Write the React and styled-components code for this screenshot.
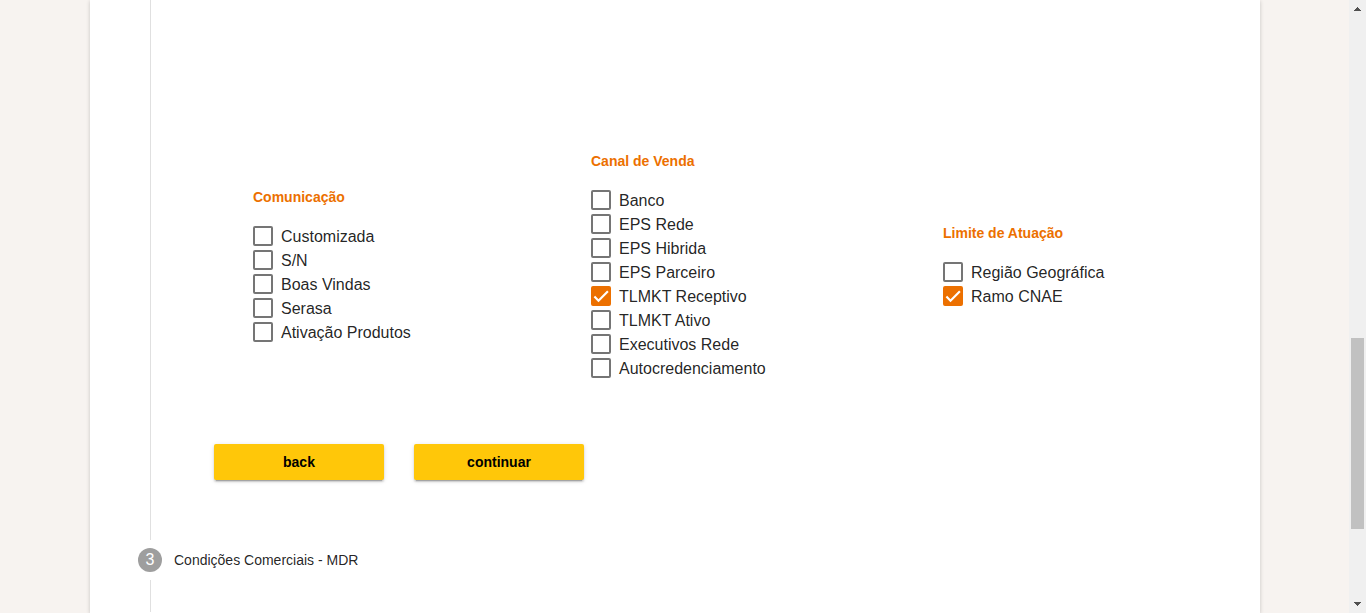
import React from "react";
import styled, { createGlobalStyle } from "styled-components";

const GlobalStyle = createGlobalStyle`
  *, *::before, *::after { box-sizing: border-box; }
  body {
    margin: 0;
    overflow: hidden;
    background: #f7f3f0;
    color: rgba(0, 0, 0, 0.87);
    font-family: "Liberation Sans", Arial, sans-serif;
  }
`;

const Page = styled.div`
  display: flex;
  height: 100vh;
  overflow: hidden;
`;

const Main = styled.main`
  flex: 1;
  min-width: 0;
  display: flex;
  padding: 0 89px 0 90px;
`;

const Card = styled.div`
  flex: 1;
  min-width: 0;
  padding: 0 48px;
  background: #fff;
  box-shadow: 0 1px 4px rgba(0, 0, 0, 0.2);
`;

const StepBody = styled.section`
  margin-left: 12px;
  border-left: 1px solid #e0e0e0;
  padding: 149px 26px 60px 63px;
`;

const NextStepBody = styled.div`
  margin-left: 12px;
  height: 32px;
  border-left: 1px solid #e0e0e0;
`;

const Groups = styled.div`
  display: grid;
  grid-template-columns: 338fr 352fr 243fr;
  align-items: center;
  padding-left: 39px;
`;

const Group = styled.fieldset`
  min-width: 0;
  margin: 0;
  border: 0;
  padding: 0;
`;

const GroupTitle = styled.legend`
  padding: 0;
  margin-bottom: 15px;
  color: #ec7000;
  font-size: 14px;
  font-weight: 700;
  line-height: 24px;
`;

const Option = styled.label`
  display: flex;
  align-items: center;
  gap: 8px;
  font-size: 16px;
  white-space: nowrap;
  cursor: pointer;
`;

const OptionText = styled.span`
  padding-top: 2px;
  line-height: 22px;
`;

const Tick = styled.span`
  display: grid;
  width: 20px;
  height: 20px;

  & > * { grid-area: 1 / 1; }
`;

const TickInput = styled.input`
  appearance: none;
  width: 20px;
  height: 20px;
  margin: 0;
  border: 2px solid #757575;
  border-radius: 2px;
  cursor: pointer;

  &:checked { border-color: #ec7000; background: #ec7000; }
  &:not(:checked) + svg { visibility: hidden; }
`;

const TickMark = styled.svg`
  width: 20px;
  height: 20px;
  pointer-events: none;
`;

const Actions = styled.div`
  display: flex;
  gap: 30px;
  margin-top: 64px;
`;

const Button = styled.button`
  width: 170px;
  height: 36px;
  border: 0;
  border-radius: 2px;
  padding: 0;
  background: #ffc709;
  color: #000;
  font: 700 14px/36px "Liberation Sans", Arial, sans-serif;
  box-shadow: 0 3px 1px -2px rgba(0, 0, 0, 0.2), 0 2px 2px 0 rgba(0, 0, 0, 0.14),
    0 1px 5px 0 rgba(0, 0, 0, 0.12);
  cursor: pointer;
`;

const StepHeader = styled.div`
  display: flex;
  align-items: center;
  gap: 12px;
  height: 40px;
  font-size: 14px;
`;

const StepNumber = styled.span`
  width: 24px;
  height: 24px;
  border-radius: 50%;
  background: #9e9e9e;
  color: #fff;
  font-size: 16px;
  line-height: 24px;
  text-align: center;
`;

const Scrollbar = styled.div`
  display: flex;
  flex-direction: column;
  align-items: center;
  width: 17px;
  background: #f0f0f0;
`;

const Arrow = styled.svg`
  flex: none;
  width: 17px;
  height: 17px;
  fill: #505050;
`;

const Track = styled.div`
  flex: 1;
  display: flex;
  flex-direction: column;
  width: 13px;
`;

const Before = styled.div`
  flex: 321;
`;

const Thumb = styled.div`
  flex: 191;
  background: #c1c1c1;
`;

const After = styled.div`
  flex: 67;
`;

const groups = [
  {
    title: "Comunicação",
    options: ["Customizada", "S/N", "Boas Vindas", "Serasa", "Ativação Produtos"],
  },
  {
    title: "Canal de Venda",
    options: [
      "Banco",
      "EPS Rede",
      "EPS Hibrida",
      "EPS Parceiro",
      "TLMKT Receptivo",
      "TLMKT Ativo",
      "Executivos Rede",
      "Autocredenciamento",
    ],
  },
  { title: "Limite de Atuação", options: ["Região Geográfica", "Ramo CNAE"] },
];

const selected = ["TLMKT Receptivo", "Ramo CNAE"];

function CheckOption({ name }) {
  return (
    <Option>
      <Tick>
        <TickInput type="checkbox" defaultChecked={selected.includes(name)} />
        <TickMark viewBox="0 0 24 24" aria-hidden="true">
          <path d="M4.1 12.7 9 17.6 20.3 6.3" fill="none" stroke="#fff" strokeWidth="2.6" />
        </TickMark>
      </Tick>
      <OptionText>{name}</OptionText>
    </Option>
  );
}

export default function App() {
  return (
    <Page>
      <GlobalStyle />
      <Main>
        <Card>
          <StepBody>
            <Groups>
              {groups.map((group) => (
                <Group key={group.title}>
                  <GroupTitle>{group.title}</GroupTitle>
                  {group.options.map((name) => (
                    <CheckOption key={name} name={name} />
                  ))}
                </Group>
              ))}
            </Groups>
            <Actions>
              <Button type="button">back</Button>
              <Button type="button">continuar</Button>
            </Actions>
          </StepBody>
          <StepHeader>
            <StepNumber>3</StepNumber>
            <span>Condições Comerciais - MDR</span>
          </StepHeader>
          <NextStepBody />
        </Card>
      </Main>
      <Scrollbar aria-hidden="true">
        <Arrow viewBox="0 0 17 17" shapeRendering="crispEdges">
          <path d="M8 7h1v1h1v1h1v1h1v1H5v-1h1V9h1V8h1z" />
        </Arrow>
        <Track>
          <Before />
          <Thumb />
          <After />
        </Track>
        <Arrow viewBox="0 0 17 17" shapeRendering="crispEdges">
          <path d="M5 6h7v1h-1v1h-1v1H9v1H8V9H7V8H6V7H5z" />
        </Arrow>
      </Scrollbar>
    </Page>
  );
}
